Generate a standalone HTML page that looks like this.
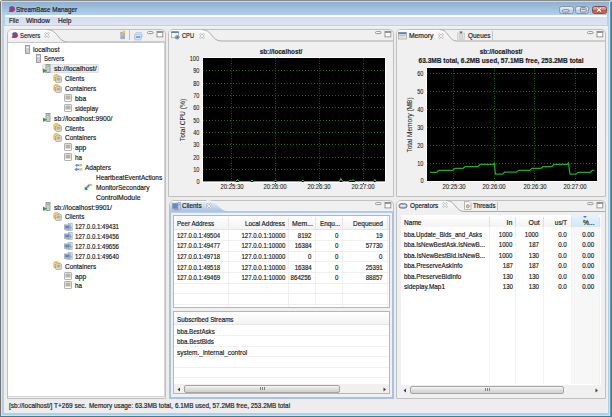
<!DOCTYPE html><html><head><meta charset="utf-8"><style>
*{margin:0;padding:0;box-sizing:border-box}
html,body{width:612px;height:417px;overflow:hidden;background:#f4f4f4;font-family:"Liberation Sans", sans-serif;color:#1c1c1c}
.a{position:absolute}
.t{position:absolute;white-space:nowrap;line-height:10px;height:10px;-webkit-text-stroke:0.2px #1c1c1c}
svg{position:absolute;overflow:visible}
</style></head><body>
<div class="a" style="left:0px;top:0px;width:612px;height:417px;background:linear-gradient(#cad8e8 0px,#cad8e8 1px,#8fb0d0 1px,#b3d0ea 14px,#b6d0ea 30px,#b2cde7);border:1px solid #75716c;border-top-color:#8c8a86;border-radius:3px 3px 0 0"></div>
<div class="a" style="left:1px;top:1px;width:610px;height:1px;background:#cad8e8"></div>
<div class="a" style="left:1px;top:2px;width:1px;height:414px;background:#d6e4f4"></div>
<div class="a" style="left:609px;top:2px;width:1px;height:414px;background:#cce2f8"></div>
<div class="a" style="left:610px;top:2px;width:2px;height:415px;background:linear-gradient(90deg,#5aa0b8,#2a8098)"></div>
<svg style="left:7.8px;top:6.2px" width="7" height="6" viewBox="0 0 7 6"><path d="M1.2 1.5Q2.5 0 5 0.3L6.5 1.5 7 4Q6.5 5.8 4 6H0.5L1.5 4.8z" fill="#3464c4"/><path d="M2.2 0.8H5.2Q6.4 1.2 6.2 3.2Q6 4.8 4.5 5H1.4L2 3.6H4.2Q4.8 3 4.3 2.4H2.6z" fill="#d42a42"/></svg>
<div class="t" style="left:16.4px;top:5.00px;font-size:7.8px;transform:scaleX(0.804);transform-origin:0 7.70px;color:#202020">StreamBase Manager</div>
<div class="a" style="left:558.5px;top:5.5px;width:15px;height:8px;border:1px solid #8596ae;border-radius:2.5px;background:linear-gradient(#e4edf7,#d3e0ef 45%,#b8cbe3 50%,#c4d6ec)"></div>
<svg style="left:562px;top:9px" width="8" height="4" viewBox="0 0 8 4"><rect x="0.5" y="0.7" width="6.5" height="2.3" rx="1" fill="#e6e6e6" stroke="#707070" stroke-width="0.8"/></svg>
<div class="a" style="left:575.3px;top:5.5px;width:13.5px;height:8px;border:1px solid #8596ae;border-radius:2.5px;background:linear-gradient(#e4edf7,#d3e0ef 45%,#b8cbe3 50%,#c4d6ec)"></div>
<svg style="left:579.5px;top:7px" width="7" height="6" viewBox="0 0 7 6"><rect x="0.5" y="0.6" width="5.5" height="4.4" rx="0.8" fill="#e6e6e6" stroke="#707070" stroke-width="0.8"/><rect x="1.5" y="1.8" width="3.5" height="0.9" fill="#5a6a8a"/></svg>
<div class="a" style="left:591.5px;top:5.5px;width:15.3px;height:8px;border:1px solid #8a4a40;border-radius:2.5px;background:linear-gradient(#f0b3a6,#e08472 45%,#c9503a 50%,#d56a50)"></div>
<svg style="left:596.3px;top:6.8px" width="6" height="5.5" viewBox="0 0 6 5.5"><path d="M1 0.8L5 4.8M5 0.8L1 4.8" stroke="#8a5050" stroke-width="2.2"/><path d="M1 0.8L5 4.8M5 0.8L1 4.8" stroke="#f4f4f4" stroke-width="1.3"/></svg>
<div class="a" style="left:5px;top:15px;width:602px;height:11px;background:linear-gradient(#fafcfe 0px,#fafcfe 2px,#d3dcee 2px,#dfe3f5 10px,#c9ced9 10px)"></div>
<div class="t" style="left:8.5px;top:16.00px;font-size:7.8px;transform:scaleX(0.779);transform-origin:0 7.70px;">File</div>
<div class="t" style="left:26.1px;top:16.00px;font-size:7.8px;transform:scaleX(0.855);transform-origin:0 7.70px;">Window</div>
<div class="t" style="left:58px;top:16.00px;font-size:7.8px;transform:scaleX(0.835);transform-origin:0 7.70px;">Help</div>
<div class="a" style="left:5px;top:26px;width:602px;height:386.5px;background:linear-gradient(#f2f2f2,#ececec 3px,#ededed)"></div>
<div class="t" style="left:8.5px;top:401.00px;font-size:7.8px;transform:scaleX(0.833);transform-origin:0 7.70px;">[sb://localhost/] T+269 sec.</div>
<div class="t" style="left:89px;top:401.00px;font-size:7.8px;transform:scaleX(0.822);transform-origin:0 7.70px;">Memory usage: 63.3MB total,</div>
<div class="t" style="left:174.8px;top:401.00px;font-size:7.8px;transform:scaleX(0.817);transform-origin:0 7.70px;">6.1MB used, 57.2MB free, 253.2MB total</div>
<div class="a" style="left:2px;top:415px;width:608px;height:1px;background:#c8e0f8"></div>
<div class="a" style="left:0px;top:416px;width:612px;height:1px;background:#2f8699"></div>
<div class="a" style="left:4px;top:26px;width:1px;height:387px;background:#f2f0ec"></div>
<div class="a" style="left:607px;top:26px;width:1px;height:387px;background:#f2f0ec"></div>
<svg style="left:0;top:0" width="1" height="1"><defs><linearGradient id="ga" x1="0" y1="0" x2="0" y2="1"><stop offset="0" stop-color="#edf1f6"/><stop offset="0.3" stop-color="#dae5f2"/><stop offset="1" stop-color="#a8c2e5"/></linearGradient><linearGradient id="gi" x1="0" y1="0" x2="0" y2="1"><stop offset="0" stop-color="#fbfbfb"/><stop offset="1" stop-color="#eeeeee"/></linearGradient></defs></svg>
<div class="a" style="left:7px;top:29px;width:159px;height:370px;border:1px solid #c0c0c0;border-radius:5px 5px 0 0;background:#f0f0f0"></div>
<svg style="left:7px;top:28px" width="159" height="16" viewBox="0 0 159 16"><path d="M1 14 L1 6 Q1 2 5 2 L41 2 C50.75 2 50.75 14 60.5 14 Z" fill="url(#gi)"/><path d="M4 2.5H40" stroke="#ffffff" stroke-width="1"/><path d="M40 1.5 C50.75 1.5 50.75 14 60.5 14 L158 14" fill="none" stroke="#ababab" stroke-width="1"/></svg>
<svg style="left:146.5px;top:30.5px" width="17" height="8" viewBox="0 0 17 8"><rect x="0.5" y="0.6" width="5.6" height="2" rx="1" fill="#fff" stroke="#8c8c8c" stroke-width="0.9"/><rect x="10" y="0.5" width="5.8" height="5.4" fill="#fff" stroke="#8c8c8c" stroke-width="0.9"/><rect x="10" y="0.5" width="5.8" height="1.4" fill="#8c8c8c"/></svg>
<div class="a" style="left:168px;top:29px;width:226px;height:168px;border:1px solid #c0c0c0;border-radius:5px 5px 0 0;background:#f0f0f0"></div>
<svg style="left:168px;top:28px" width="226" height="15" viewBox="0 0 226 15"><path d="M1 13 L1 6 Q1 2 5 2 L34.599999999999994 2 C43.849999999999994 2 43.849999999999994 13 53.099999999999994 13 Z" fill="url(#gi)"/><path d="M4 2.5H33.599999999999994" stroke="#ffffff" stroke-width="1"/><path d="M33.599999999999994 1.5 C43.849999999999994 1.5 43.849999999999994 13 53.099999999999994 13 L225 13" fill="none" stroke="#ababab" stroke-width="1"/></svg>
<svg style="left:374.5px;top:30.5px" width="17" height="8" viewBox="0 0 17 8"><rect x="0.5" y="0.6" width="5.6" height="2" rx="1" fill="#fff" stroke="#8c8c8c" stroke-width="0.9"/><rect x="10" y="0.5" width="5.8" height="5.4" fill="#fff" stroke="#8c8c8c" stroke-width="0.9"/><rect x="10" y="0.5" width="5.8" height="1.4" fill="#8c8c8c"/></svg>
<div class="a" style="left:396px;top:29px;width:210px;height:168px;border:1px solid #c0c0c0;border-radius:5px 5px 0 0;background:#f0f0f0"></div>
<svg style="left:396px;top:28px" width="210" height="15" viewBox="0 0 210 15"><path d="M1 13 L1 6 Q1 2 5 2 L44.5 2 C52.5 2 52.5 13 60.5 13 Z" fill="url(#gi)"/><path d="M4 2.5H43.5" stroke="#ffffff" stroke-width="1"/><path d="M43.5 1.5 C52.5 1.5 52.5 13 60.5 13 L209 13" fill="none" stroke="#ababab" stroke-width="1"/></svg>
<svg style="left:586.5px;top:30.5px" width="17" height="8" viewBox="0 0 17 8"><rect x="0.5" y="0.6" width="5.6" height="2" rx="1" fill="#fff" stroke="#8c8c8c" stroke-width="0.9"/><rect x="10" y="0.5" width="5.8" height="5.4" fill="#fff" stroke="#8c8c8c" stroke-width="0.9"/><rect x="10" y="0.5" width="5.8" height="1.4" fill="#8c8c8c"/></svg>
<div class="a" style="left:169px;top:200px;width:225px;height:199px;border:1px solid #c0c0c0;border-radius:5px 5px 0 0;background:#f0f0f0"></div>
<svg style="left:169px;top:199px" width="225" height="14" viewBox="0 0 225 14"><path d="M1 12 L1 6 Q1 2 5 2 L38.5 2 C49.5 2 49.5 12 60.5 12 Z" fill="url(#ga)"/><path d="M4 2.5H37.5" stroke="#ffffff" stroke-width="1"/><path d="M37.5 1.5 C49.5 1.5 49.5 12 60.5 12 L224 12" fill="none" stroke="#f4f6f9" stroke-width="1"/></svg>
<svg style="left:374.5px;top:201.5px" width="17" height="8" viewBox="0 0 17 8"><rect x="0.5" y="0.6" width="5.6" height="2" rx="1" fill="#fff" stroke="#8c8c8c" stroke-width="0.9"/><rect x="10" y="0.5" width="5.8" height="5.4" fill="#fff" stroke="#8c8c8c" stroke-width="0.9"/><rect x="10" y="0.5" width="5.8" height="1.4" fill="#8c8c8c"/></svg>
<div class="a" style="left:396px;top:200px;width:210px;height:199px;border:1px solid #c0c0c0;border-radius:5px 5px 0 0;background:#f0f0f0"></div>
<svg style="left:396px;top:199px" width="210" height="14.5" viewBox="0 0 210 14.5"><path d="M1 12.5 L1 6 Q1 2 5 2 L51 2 C59.5 2 59.5 12.5 68 12.5 Z" fill="url(#gi)"/><path d="M4 2.5H50" stroke="#ffffff" stroke-width="1"/><path d="M50 1.5 C59.5 1.5 59.5 12.5 68 12.5 L209 12.5" fill="none" stroke="#ababab" stroke-width="1"/></svg>
<svg style="left:586.5px;top:201.5px" width="17" height="8" viewBox="0 0 17 8"><rect x="0.5" y="0.6" width="5.6" height="2" rx="1" fill="#fff" stroke="#8c8c8c" stroke-width="0.9"/><rect x="10" y="0.5" width="5.8" height="5.4" fill="#fff" stroke="#8c8c8c" stroke-width="0.9"/><rect x="10" y="0.5" width="5.8" height="1.4" fill="#8c8c8c"/></svg>
<div class="a" style="left:170px;top:211px;width:223px;height:2px;background:linear-gradient(#aac3e6,#bcd0eb)"></div>
<div class="a" style="left:170px;top:213px;width:223px;height:1.5px;background:#eef2f8"></div>
<div class="a" style="left:169px;top:213px;width:1.5px;height:185.5px;background:#a9c1e2"></div>
<div class="a" style="left:392px;top:213px;width:2px;height:185.5px;background:#a9c1e2"></div>
<div class="a" style="left:169px;top:397px;width:225px;height:1.5px;background:#a9c1e2"></div>
<svg style="left:11px;top:32px" width="7" height="6" viewBox="0 0 7 6"><path d="M1.2 1.5Q2.5 0 5 0.3L6.5 1.5 7 4Q6.5 5.8 4 6H0.5L1.5 4.8z" fill="#3464c4"/><path d="M2.2 0.8H5.2Q6.4 1.2 6.2 3.2Q6 4.8 4.5 5H1.4L2 3.6H4.2Q4.8 3 4.3 2.4H2.6z" fill="#d42a42"/></svg>
<div class="t" style="left:19.7px;top:31.00px;font-size:7.8px;transform:scaleX(0.748);transform-origin:0 7.70px;">Servers</div>
<svg style="left:44.3px;top:32.4px" width="6" height="6" viewBox="0 0 6 6"><path d="M0.8 0.8L5.2 5.2M5.2 0.8L0.8 5.2" stroke="#bcbcbc" stroke-width="2"/><path d="M0.8 0.8L5.2 5.2M5.2 0.8L0.8 5.2" stroke="#f8f8f8" stroke-width="0.9"/></svg>
<svg style="left:171px;top:31px" width="10" height="9" viewBox="0 0 10 9"><rect x="0.5" y="0.8" width="7" height="6" fill="#fbfbf8" stroke="#a89e84" stroke-width="0.7"/><rect x="0.3" y="0.4" width="7.4" height="1.6" fill="#4f80cc"/><circle cx="6.2" cy="6.2" r="2" fill="#8aa6c8" stroke="#5a7aa4" stroke-width="0.8" stroke-dasharray="0.8 0.5"/><circle cx="6.2" cy="6.2" r="0.7" fill="#2a4a78"/></svg>
<div class="t" style="left:182px;top:31.00px;font-size:7.8px;transform:scaleX(0.729);transform-origin:0 7.70px;">CPU</div>
<svg style="left:198.5px;top:32.5px" width="6" height="6" viewBox="0 0 6 6"><path d="M0.8 0.8L5.2 5.2M5.2 0.8L0.8 5.2" stroke="#bcbcbc" stroke-width="2"/><path d="M0.8 0.8L5.2 5.2M5.2 0.8L0.8 5.2" stroke="#f8f8f8" stroke-width="0.9"/></svg>
<svg style="left:398px;top:31.5px" width="9" height="8" viewBox="0 0 9 8"><rect x="0.4" y="0.4" width="8" height="6.6" fill="#f4f2ea" stroke="#a89e84" stroke-width="0.7"/><rect x="0.4" y="0.4" width="8" height="1.8" fill="#4f80cc"/><rect x="1.2" y="2.8" width="6.4" height="1.4" fill="#a8c0e4"/><rect x="1.2" y="4.6" width="6.4" height="1.2" fill="#c8d8ee"/></svg>
<div class="t" style="left:409px;top:31.00px;font-size:7.8px;transform:scaleX(0.863);transform-origin:0 7.70px;">Memory</div>
<svg style="left:438px;top:32.5px" width="6" height="6" viewBox="0 0 6 6"><path d="M0.8 0.8L5.2 5.2M5.2 0.8L0.8 5.2" stroke="#bcbcbc" stroke-width="2"/><path d="M0.8 0.8L5.2 5.2M5.2 0.8L0.8 5.2" stroke="#f8f8f8" stroke-width="0.9"/></svg>
<svg style="left:457px;top:30.5px" width="8" height="9" viewBox="0 0 8 9"><rect x="0.5" y="2" width="7" height="6.5" fill="#e4e4e4" stroke="#c4c4c4" stroke-width="0.6"/><path d="M2.5 2.5V8M4 2.5V8M5.5 2.5V8" stroke="#bdbdbd" stroke-width="0.6"/><path d="M2.3 0.5H5.7L4 3z" fill="#606060"/></svg>
<div class="t" style="left:467.9px;top:31.00px;font-size:7.8px;transform:scaleX(0.824);transform-origin:0 7.70px;">Queues</div>
<div class="a" style="left:491.5px;top:31px;width:1px;height:10px;background:#c4c4c4"></div>
<svg style="left:171.5px;top:202px" width="9" height="9" viewBox="0 0 9 9"><rect x="0.5" y="1.5" width="6.5" height="5" fill="#5a8ed8" stroke="#8a96a8" stroke-width="0.8"/><rect x="1.5" y="7" width="5" height="1.5" fill="#a0a8b4"/><rect x="6" y="0.5" width="2.5" height="7" fill="#d0d4da" stroke="#8a96a8" stroke-width="0.6"/><rect x="6.8" y="2" width="1" height="1" fill="#3cb040"/></svg>
<div class="t" style="left:181.7px;top:201.00px;font-size:7.8px;transform:scaleX(0.822);transform-origin:0 7.70px;">Clients</div>
<svg style="left:205.6px;top:203px" width="6" height="6" viewBox="0 0 6 6"><path d="M0.8 0.8L5.2 5.2M5.2 0.8L0.8 5.2" stroke="#bcbcbc" stroke-width="2"/><path d="M0.8 0.8L5.2 5.2M5.2 0.8L0.8 5.2" stroke="#f8f8f8" stroke-width="0.9"/></svg>
<svg style="left:398px;top:203px" width="10" height="6" viewBox="0 0 10 6"><rect x="1" y="0.8" width="8" height="4.2" rx="2" fill="#c4c6dc" stroke="#5a5c70" stroke-width="0.9"/><rect x="2.5" y="2" width="5" height="1.6" fill="#e8e8f4"/></svg>
<div class="t" style="left:409.6px;top:201.00px;font-size:7.8px;transform:scaleX(0.813);transform-origin:0 7.70px;">Operators</div>
<svg style="left:442.3px;top:202px" width="6" height="6" viewBox="0 0 6 6"><path d="M0.8 0.8L5.2 5.2M5.2 0.8L0.8 5.2" stroke="#bcbcbc" stroke-width="2"/><path d="M0.8 0.8L5.2 5.2M5.2 0.8L0.8 5.2" stroke="#f8f8f8" stroke-width="0.9"/></svg>
<svg style="left:463.5px;top:201px" width="8" height="9" viewBox="0 0 8 9"><path d="M0.5 0.5h4.5l2 2v6h-6.5z" fill="#fbfbfb" stroke="#c0a468" stroke-width="0.8"/><circle cx="3.8" cy="5.2" r="1.6" fill="#b8cce8" stroke="#5a80b8" stroke-width="0.6"/></svg>
<div class="t" style="left:472.7px;top:201.00px;font-size:7.8px;transform:scaleX(0.786);transform-origin:0 7.70px;">Threads</div>
<div class="a" style="left:497px;top:201.5px;width:1px;height:10px;background:#c4c4c4"></div>
<div class="a" style="left:8px;top:42px;width:157px;height:1.5px;background:#c8c8c8"></div>
<div class="a" style="left:8px;top:43px;width:156px;height:354px;background:#fff"></div>
<div class="a" style="left:164px;top:43px;width:1px;height:354px;background:#d4d4d8"></div>
<div class="a" style="left:8px;top:396px;width:157px;height:1px;background:#d4d4d8"></div>
<svg style="left:120px;top:30px" width="7" height="10" viewBox="0 0 7 10"><rect x="0.8" y="2.2" width="3.8" height="6.6" fill="#b4bccc" stroke="#9098a8" stroke-width="0.6"/><rect x="1.4" y="6" width="2.6" height="2.2" fill="#9aa8d0"/><circle cx="4" cy="2" r="1.4" fill="#f4c84a"/><path d="M3.6 3.4v1.2h0.8v-1.2" fill="#c8a040"/></svg>
<div class="a" style="left:129px;top:30px;width:1px;height:10px;background:#c0c0c0"></div>
<svg style="left:134px;top:31.5px" width="9" height="9" viewBox="0 0 9 9"><rect x="2" y="0.5" width="6" height="5" rx="0.8" fill="#e4eefa" stroke="#a4c0e4" stroke-width="0.7"/><rect x="0.6" y="2.2" width="6.6" height="5.6" rx="0.8" fill="#dce8f8" stroke="#8eb0dc" stroke-width="0.7"/><rect x="1.8" y="4.4" width="4.4" height="1.3" fill="#4a82d0"/></svg>
<svg style="left:25px;top:44.6px" width="5" height="9" viewBox="0 0 5 9"><rect x="0.5" y="0.5" width="4" height="8" fill="#c9ccd4" stroke="#8a8e98" stroke-width="0.8"/><rect x="1.2" y="2" width="2.6" height="1" fill="#f4f4f4"/></svg>
<div class="t" style="left:33px;top:45.00px;font-size:7.8px;transform:scaleX(0.861);transform-origin:0 7.70px;">localhost</div>
<svg style="left:35.6px;top:54.47px" width="5" height="9" viewBox="0 0 5 9"><rect x="0.5" y="0.5" width="4" height="8" fill="#c9ccd4" stroke="#8a8e98" stroke-width="0.8"/><rect x="1.2" y="2" width="2.6" height="1" fill="#f4f4f4"/></svg>
<div class="t" style="left:43.6px;top:54.00px;font-size:7.8px;transform:scaleX(0.752);transform-origin:0 7.70px;">Servers</div>
<div class="a" style="left:41.5px;top:64.3px;width:57.5px;height:9.2px;background:#ebebeb;border:1px solid #dedede;border-radius:1.5px"></div>
<svg style="left:42.7px;top:63.84px" width="8" height="9" viewBox="0 0 8 9"><rect x="3" y="0.5" width="4" height="8" fill="#c9ccd4" stroke="#8a8e98" stroke-width="0.8"/><rect x="4.5" y="1.5" width="1.2" height="1.2" fill="#3cb040"/><path d="M0 4.5L4 6.8 0 9z" fill="#2aa030"/></svg>
<div class="t" style="left:54.2px;top:64.00px;font-size:7.8px;transform:scaleX(0.895);transform-origin:0 7.70px;">sb://localhost/</div>
<svg style="left:53.3px;top:73.71000000000001px" width="9" height="9" viewBox="0 0 9 9"><path d="M0.8 2.2Q0.8 0.6 2.4 0.6H4.2Q5.4 0.6 5.6 1.6H6.4Q7.2 1.8 7.2 3V6.5H0.8z" fill="#f2c45a" stroke="#d8a03a" stroke-width="0.6"/><path d="M1.2 2.2H6.8" stroke="#fde6a8" stroke-width="0.8"/><rect x="2.6" y="2.8" width="5.8" height="5.6" rx="0.6" fill="#e4e0da" stroke="#8e98a8" stroke-width="0.7"/><rect x="3.6" y="3.8" width="3.8" height="2.8" fill="#b8ae98"/></svg>
<div class="t" style="left:64.8px;top:74.00px;font-size:7.8px;transform:scaleX(0.809);transform-origin:0 7.70px;">Clients</div>
<svg style="left:53.3px;top:83.58px" width="9" height="9" viewBox="0 0 9 9"><path d="M0.8 2.2Q0.8 0.6 2.4 0.6H4.2Q5.4 0.6 5.6 1.6H6.4Q7.2 1.8 7.2 3V6.5H0.8z" fill="#f2c45a" stroke="#d8a03a" stroke-width="0.6"/><path d="M1.2 2.2H6.8" stroke="#fde6a8" stroke-width="0.8"/><rect x="2.6" y="2.8" width="5.8" height="5.6" rx="0.6" fill="#e4e0da" stroke="#8e98a8" stroke-width="0.7"/><rect x="3.6" y="3.8" width="3.8" height="2.8" fill="#b8ae98"/></svg>
<div class="t" style="left:64.8px;top:84.00px;font-size:7.8px;transform:scaleX(0.827);transform-origin:0 7.70px;">Containers</div>
<svg style="left:64.4px;top:93.94999999999999px" width="8" height="8" viewBox="0 0 8 8"><rect x="0.5" y="0.5" width="7" height="7" rx="0.6" fill="#eeebe6" stroke="#98a2b0" stroke-width="0.8"/><rect x="1.6" y="1.6" width="4.8" height="3.8" fill="#bdb29a"/><rect x="1.3" y="6" width="5.4" height="1" fill="#ffffff"/></svg>
<div class="t" style="left:75px;top:94.00px;font-size:7.8px;transform:scaleX(0.861);transform-origin:0 7.70px;">bba</div>
<svg style="left:64.4px;top:103.82px" width="8" height="8" viewBox="0 0 8 8"><rect x="0.5" y="0.5" width="7" height="7" rx="0.6" fill="#eeebe6" stroke="#98a2b0" stroke-width="0.8"/><rect x="1.6" y="1.6" width="4.8" height="3.8" fill="#bdb29a"/><rect x="1.3" y="6" width="5.4" height="1" fill="#ffffff"/></svg>
<div class="t" style="left:75px;top:104.00px;font-size:7.8px;transform:scaleX(0.807);transform-origin:0 7.70px;">sideplay</div>
<svg style="left:42.7px;top:113.19px" width="8" height="9" viewBox="0 0 8 9"><rect x="3" y="0.5" width="4" height="8" fill="#c9ccd4" stroke="#8a8e98" stroke-width="0.8"/><rect x="4.5" y="1.5" width="1.2" height="1.2" fill="#3cb040"/><path d="M0 4.5L4 6.8 0 9z" fill="#2aa030"/></svg>
<div class="t" style="left:54.2px;top:114.00px;font-size:7.8px;transform:scaleX(0.868);transform-origin:0 7.70px;">sb://localhost:9900/</div>
<svg style="left:53.3px;top:123.06px" width="9" height="9" viewBox="0 0 9 9"><path d="M0.8 2.2Q0.8 0.6 2.4 0.6H4.2Q5.4 0.6 5.6 1.6H6.4Q7.2 1.8 7.2 3V6.5H0.8z" fill="#f2c45a" stroke="#d8a03a" stroke-width="0.6"/><path d="M1.2 2.2H6.8" stroke="#fde6a8" stroke-width="0.8"/><rect x="2.6" y="2.8" width="5.8" height="5.6" rx="0.6" fill="#e4e0da" stroke="#8e98a8" stroke-width="0.7"/><rect x="3.6" y="3.8" width="3.8" height="2.8" fill="#b8ae98"/></svg>
<div class="t" style="left:64.8px;top:124.00px;font-size:7.8px;transform:scaleX(0.809);transform-origin:0 7.70px;">Clients</div>
<svg style="left:53.3px;top:132.93px" width="9" height="9" viewBox="0 0 9 9"><path d="M0.8 2.2Q0.8 0.6 2.4 0.6H4.2Q5.4 0.6 5.6 1.6H6.4Q7.2 1.8 7.2 3V6.5H0.8z" fill="#f2c45a" stroke="#d8a03a" stroke-width="0.6"/><path d="M1.2 2.2H6.8" stroke="#fde6a8" stroke-width="0.8"/><rect x="2.6" y="2.8" width="5.8" height="5.6" rx="0.6" fill="#e4e0da" stroke="#8e98a8" stroke-width="0.7"/><rect x="3.6" y="3.8" width="3.8" height="2.8" fill="#b8ae98"/></svg>
<div class="t" style="left:64.8px;top:133.00px;font-size:7.8px;transform:scaleX(0.827);transform-origin:0 7.70px;">Containers</div>
<svg style="left:64.4px;top:143.29999999999998px" width="8" height="8" viewBox="0 0 8 8"><rect x="0.5" y="0.5" width="7" height="7" rx="0.6" fill="#eeebe6" stroke="#98a2b0" stroke-width="0.8"/><rect x="1.6" y="1.6" width="4.8" height="3.8" fill="#bdb29a"/><rect x="1.3" y="6" width="5.4" height="1" fill="#ffffff"/></svg>
<div class="t" style="left:75px;top:143.00px;font-size:7.8px;transform:scaleX(0.861);transform-origin:0 7.70px;">app</div>
<svg style="left:64.4px;top:153.17px" width="8" height="8" viewBox="0 0 8 8"><rect x="0.5" y="0.5" width="7" height="7" rx="0.6" fill="#eeebe6" stroke="#98a2b0" stroke-width="0.8"/><rect x="1.6" y="1.6" width="4.8" height="3.8" fill="#bdb29a"/><rect x="1.3" y="6" width="5.4" height="1" fill="#ffffff"/></svg>
<div class="t" style="left:75px;top:153.00px;font-size:7.8px;transform:scaleX(0.806);transform-origin:0 7.70px;">ha</div>
<svg style="left:73.8px;top:162.54px" width="9" height="9" viewBox="0 0 9 9"><path d="M0.8 2.2L3.2 0.4V1.4H5.2V3H3.2V4z" fill="#5f8fd8"/><rect x="5.2" y="1" width="2.8" height="2.4" fill="#e6c060"/><path d="M0.2 6.4L2.8 4.6V5.6H5.4V7.2H2.8V8.2z" fill="#5f8fd8"/><rect x="5.4" y="5.2" width="3" height="2.4" fill="#e6c060"/></svg>
<div class="t" style="left:85.3px;top:163.00px;font-size:7.8px;transform:scaleX(0.830);transform-origin:0 7.70px;">Adapters</div>
<div class="t" style="left:96.1px;top:173.00px;font-size:7.8px;transform:scaleX(0.829);transform-origin:0 7.70px;">HeartbeatEventActions</div>
<svg style="left:83.6px;top:182.27999999999997px" width="10" height="9" viewBox="0 0 10 9"><path d="M0.3 6L2.6 4.4 3.8 7.4 1.2 8.6z" fill="#2f9e3e"/><path d="M2.2 4.6L4.8 2 6.4 3.6 3.8 6.2z" fill="#6a98dc"/><path d="M5.6 1.6L9.2 3.1 5.6 4.4z" fill="#e9b83c"/></svg>
<div class="t" style="left:96.1px;top:183.00px;font-size:7.8px;transform:scaleX(0.845);transform-origin:0 7.70px;">MonitorSecondary</div>
<div class="t" style="left:96.1px;top:193.00px;font-size:7.8px;transform:scaleX(0.877);transform-origin:0 7.70px;">ControlModule</div>
<svg style="left:42.7px;top:202.01999999999998px" width="8" height="9" viewBox="0 0 8 9"><rect x="3" y="0.5" width="4" height="8" fill="#c9ccd4" stroke="#8a8e98" stroke-width="0.8"/><rect x="4.5" y="1.5" width="1.2" height="1.2" fill="#3cb040"/><path d="M0 4.5L4 6.8 0 9z" fill="#2aa030"/></svg>
<div class="t" style="left:54.2px;top:203.00px;font-size:7.8px;transform:scaleX(0.863);transform-origin:0 7.70px;">sb://localhost:9901/</div>
<svg style="left:53.3px;top:211.89px" width="9" height="9" viewBox="0 0 9 9"><path d="M0.8 2.2Q0.8 0.6 2.4 0.6H4.2Q5.4 0.6 5.6 1.6H6.4Q7.2 1.8 7.2 3V6.5H0.8z" fill="#f2c45a" stroke="#d8a03a" stroke-width="0.6"/><path d="M1.2 2.2H6.8" stroke="#fde6a8" stroke-width="0.8"/><rect x="2.6" y="2.8" width="5.8" height="5.6" rx="0.6" fill="#e4e0da" stroke="#8e98a8" stroke-width="0.7"/><rect x="3.6" y="3.8" width="3.8" height="2.8" fill="#b8ae98"/></svg>
<div class="t" style="left:64.8px;top:212.00px;font-size:7.8px;transform:scaleX(0.809);transform-origin:0 7.70px;">Clients</div>
<svg style="left:64px;top:222.56px" width="9" height="8" viewBox="0 0 9 8"><rect x="4.6" y="0.4" width="3.6" height="7" fill="#dde0e5" stroke="#a4abb4" stroke-width="0.6"/><rect x="6.7" y="4.2" width="0.9" height="1.3" fill="#3cb83c"/><rect x="0.4" y="1.9" width="6" height="4.4" fill="#c9cdd3" stroke="#8c949e" stroke-width="0.6"/><rect x="1.2" y="2.6" width="4.4" height="2.9" fill="#4f8ad8"/><rect x="1.8" y="6.6" width="3.4" height="1" fill="#a8aeb6"/></svg>
<div class="t" style="left:75px;top:222.00px;font-size:7.8px;transform:scaleX(0.780);transform-origin:0 7.70px;">127.0.0.1:49431</div>
<svg style="left:64px;top:232.42999999999998px" width="9" height="8" viewBox="0 0 9 8"><rect x="4.6" y="0.4" width="3.6" height="7" fill="#dde0e5" stroke="#a4abb4" stroke-width="0.6"/><rect x="6.7" y="4.2" width="0.9" height="1.3" fill="#3cb83c"/><rect x="0.4" y="1.9" width="6" height="4.4" fill="#c9cdd3" stroke="#8c949e" stroke-width="0.6"/><rect x="1.2" y="2.6" width="4.4" height="2.9" fill="#4f8ad8"/><rect x="1.8" y="6.6" width="3.4" height="1" fill="#a8aeb6"/></svg>
<div class="t" style="left:75px;top:232.00px;font-size:7.8px;transform:scaleX(0.780);transform-origin:0 7.70px;">127.0.0.1:49456</div>
<svg style="left:64px;top:242.29999999999998px" width="9" height="8" viewBox="0 0 9 8"><rect x="4.6" y="0.4" width="3.6" height="7" fill="#dde0e5" stroke="#a4abb4" stroke-width="0.6"/><rect x="6.7" y="4.2" width="0.9" height="1.3" fill="#3cb83c"/><rect x="0.4" y="1.9" width="6" height="4.4" fill="#c9cdd3" stroke="#8c949e" stroke-width="0.6"/><rect x="1.2" y="2.6" width="4.4" height="2.9" fill="#4f8ad8"/><rect x="1.8" y="6.6" width="3.4" height="1" fill="#a8aeb6"/></svg>
<div class="t" style="left:75px;top:242.00px;font-size:7.8px;transform:scaleX(0.780);transform-origin:0 7.70px;">127.0.0.1:49656</div>
<svg style="left:64px;top:252.17000000000002px" width="9" height="8" viewBox="0 0 9 8"><rect x="4.6" y="0.4" width="3.6" height="7" fill="#dde0e5" stroke="#a4abb4" stroke-width="0.6"/><rect x="6.7" y="4.2" width="0.9" height="1.3" fill="#3cb83c"/><rect x="0.4" y="1.9" width="6" height="4.4" fill="#c9cdd3" stroke="#8c949e" stroke-width="0.6"/><rect x="1.2" y="2.6" width="4.4" height="2.9" fill="#4f8ad8"/><rect x="1.8" y="6.6" width="3.4" height="1" fill="#a8aeb6"/></svg>
<div class="t" style="left:75px;top:252.00px;font-size:7.8px;transform:scaleX(0.780);transform-origin:0 7.70px;">127.0.0.1:49640</div>
<svg style="left:53.3px;top:261.24px" width="9" height="9" viewBox="0 0 9 9"><path d="M0.8 2.2Q0.8 0.6 2.4 0.6H4.2Q5.4 0.6 5.6 1.6H6.4Q7.2 1.8 7.2 3V6.5H0.8z" fill="#f2c45a" stroke="#d8a03a" stroke-width="0.6"/><path d="M1.2 2.2H6.8" stroke="#fde6a8" stroke-width="0.8"/><rect x="2.6" y="2.8" width="5.8" height="5.6" rx="0.6" fill="#e4e0da" stroke="#8e98a8" stroke-width="0.7"/><rect x="3.6" y="3.8" width="3.8" height="2.8" fill="#b8ae98"/></svg>
<div class="t" style="left:64.8px;top:262.00px;font-size:7.8px;transform:scaleX(0.827);transform-origin:0 7.70px;">Containers</div>
<svg style="left:64.4px;top:271.61px" width="8" height="8" viewBox="0 0 8 8"><rect x="0.5" y="0.5" width="7" height="7" rx="0.6" fill="#eeebe6" stroke="#98a2b0" stroke-width="0.8"/><rect x="1.6" y="1.6" width="4.8" height="3.8" fill="#bdb29a"/><rect x="1.3" y="6" width="5.4" height="1" fill="#ffffff"/></svg>
<div class="t" style="left:75px;top:272.00px;font-size:7.8px;transform:scaleX(0.861);transform-origin:0 7.70px;">app</div>
<svg style="left:64.4px;top:281.48px" width="8" height="8" viewBox="0 0 8 8"><rect x="0.5" y="0.5" width="7" height="7" rx="0.6" fill="#eeebe6" stroke="#98a2b0" stroke-width="0.8"/><rect x="1.6" y="1.6" width="4.8" height="3.8" fill="#bdb29a"/><rect x="1.3" y="6" width="5.4" height="1" fill="#ffffff"/></svg>
<div class="t" style="left:75px;top:281.00px;font-size:7.8px;transform:scaleX(0.806);transform-origin:0 7.70px;">ha</div>
<div class="t" style="left:131.2px;width:300px;text-align:center;top:47.00px;font-size:6.8px;font-weight:bold;transform:scaleX(0.934);transform-origin:50% 7.36px;-webkit-text-stroke:0.15px #1c1c1c">sb://localhost/</div>
<div class="a" style="left:202px;top:57px;width:184px;height:126px;background:#fff"></div>
<div class="a" style="left:203px;top:58px;width:182px;height:124px;background:#000"></div>
<svg style="left:203px;top:58px" width="182" height="126" viewBox="0 0 182 126"><path d="M0 111.5H182" stroke="#0b6e0b" stroke-width="1" stroke-dasharray="1 2"/><path d="M0 99.5H182" stroke="#0b6e0b" stroke-width="1" stroke-dasharray="1 2"/><path d="M0 86.5H182" stroke="#0b6e0b" stroke-width="1" stroke-dasharray="1 2"/><path d="M0 74.5H182" stroke="#0b6e0b" stroke-width="1" stroke-dasharray="1 2"/><path d="M0 62.5H182" stroke="#0b6e0b" stroke-width="1" stroke-dasharray="1 2"/><path d="M0 49.5H182" stroke="#0b6e0b" stroke-width="1" stroke-dasharray="1 2"/><path d="M0 37.5H182" stroke="#0b6e0b" stroke-width="1" stroke-dasharray="1 2"/><path d="M0 25.5H182" stroke="#0b6e0b" stroke-width="1" stroke-dasharray="1 2"/><path d="M0 12.5H182" stroke="#0b6e0b" stroke-width="1" stroke-dasharray="1 2"/><path d="M28.5 0V126" stroke="#0b6e0b" stroke-width="1" stroke-dasharray="1 1.5"/><path d="M72.5 0V126" stroke="#0b6e0b" stroke-width="1" stroke-dasharray="1 1.5"/><path d="M116.5 0V126" stroke="#0b6e0b" stroke-width="1" stroke-dasharray="1 1.5"/><path d="M160.5 0V126" stroke="#0b6e0b" stroke-width="1" stroke-dasharray="1 1.5"/><path d="M0.0 123.5 L32.5 123.5 L34.4 121.5 L36.0 123.5 L47.5 123.5 L49.0 122.0 L50.5 123.5 L71.0 123.5 L72.6 122.3 L74.0 123.5 L98.5 123.5 L99.8 122.0 L101.0 123.5 L136.5 123.5 L137.8 120.5 L139.5 123.5 L146.0 123.5 L147.3 122.0 L148.5 123.0 L150.0 121.5 L152.0 123.5 L170.5 123.5 L171.8 121.5 L173.0 123.5 L182.0 123.5" fill="none" stroke="#46d246" stroke-width="1"/></svg>
<div class="t" style="right:412.5px;top:177.00px;font-size:6.6px;transform:scaleX(0.844);transform-origin:100% 7.29px;-webkit-text-stroke:0.08px #1c1c1c">0</div>
<div class="t" style="right:412.5px;top:165.00px;font-size:6.6px;transform:scaleX(0.844);transform-origin:100% 7.29px;-webkit-text-stroke:0.08px #1c1c1c">10</div>
<div class="t" style="right:412.5px;top:153.00px;font-size:6.6px;transform:scaleX(0.844);transform-origin:100% 7.29px;-webkit-text-stroke:0.08px #1c1c1c">20</div>
<div class="t" style="right:412.5px;top:140.00px;font-size:6.6px;transform:scaleX(0.844);transform-origin:100% 7.29px;-webkit-text-stroke:0.08px #1c1c1c">30</div>
<div class="t" style="right:412.5px;top:128.00px;font-size:6.6px;transform:scaleX(0.844);transform-origin:100% 7.29px;-webkit-text-stroke:0.08px #1c1c1c">40</div>
<div class="t" style="right:412.5px;top:116.00px;font-size:6.6px;transform:scaleX(0.844);transform-origin:100% 7.29px;-webkit-text-stroke:0.08px #1c1c1c">50</div>
<div class="t" style="right:412.5px;top:103.00px;font-size:6.6px;transform:scaleX(0.844);transform-origin:100% 7.29px;-webkit-text-stroke:0.08px #1c1c1c">60</div>
<div class="t" style="right:412.5px;top:91.00px;font-size:6.6px;transform:scaleX(0.844);transform-origin:100% 7.29px;-webkit-text-stroke:0.08px #1c1c1c">70</div>
<div class="t" style="right:412.5px;top:79.00px;font-size:6.6px;transform:scaleX(0.844);transform-origin:100% 7.29px;-webkit-text-stroke:0.08px #1c1c1c">80</div>
<div class="t" style="right:412.5px;top:66.00px;font-size:6.6px;transform:scaleX(0.844);transform-origin:100% 7.29px;-webkit-text-stroke:0.08px #1c1c1c">90</div>
<div class="t" style="right:412.5px;top:54.00px;font-size:6.6px;transform:scaleX(0.844);transform-origin:100% 7.29px;-webkit-text-stroke:0.08px #1c1c1c">100</div>
<div class="a" style="left:183.2px;top:119.7px;width:0;height:0"><div class="t" style="left:-30px;top:-5px;width:60px;text-align:center;transform:rotate(-90deg) scaleX(0.88);font-size:7.6px;-webkit-text-stroke:0.05px #1c1c1c">Total CPU (%)</div></div>
<div class="t" style="left:81.6px;width:300px;text-align:center;top:182.00px;font-size:6.6px;transform:scaleX(0.904);transform-origin:50% 7.29px;-webkit-text-stroke:0.08px #1c1c1c">20:25:30</div>
<div class="t" style="left:125.39999999999998px;width:300px;text-align:center;top:182.00px;font-size:6.6px;transform:scaleX(0.904);transform-origin:50% 7.29px;-webkit-text-stroke:0.08px #1c1c1c">20:26:00</div>
<div class="t" style="left:169.2px;width:300px;text-align:center;top:182.00px;font-size:6.6px;transform:scaleX(0.904);transform-origin:50% 7.29px;-webkit-text-stroke:0.08px #1c1c1c">20:26:30</div>
<div class="t" style="left:213px;width:300px;text-align:center;top:182.00px;font-size:6.6px;transform:scaleX(0.904);transform-origin:50% 7.29px;-webkit-text-stroke:0.08px #1c1c1c">20:27:00</div>
<div class="t" style="left:350.5px;width:300px;text-align:center;top:47.00px;font-size:6.8px;font-weight:bold;transform:scaleX(0.934);transform-origin:50% 7.36px;-webkit-text-stroke:0.15px #1c1c1c">sb://localhost/</div>
<div class="t" style="left:350.8px;width:300px;text-align:center;top:56.00px;font-size:6.8px;font-weight:bold;transform:scaleX(0.964);transform-origin:50% 7.36px;-webkit-text-stroke:0.15px #1c1c1c">63.3MB total, 6.2MB used, 57.1MB free, 253.2MB total</div>
<div class="a" style="left:426px;top:67px;width:172px;height:115px;background:#fff"></div>
<div class="a" style="left:427px;top:68px;width:170px;height:113px;background:#000"></div>
<svg style="left:427px;top:68px" width="170" height="115" viewBox="0 0 170 115"><path d="M0 95.5H170" stroke="#0b6e0b" stroke-width="1" stroke-dasharray="1 2"/><path d="M0 77.5H170" stroke="#0b6e0b" stroke-width="1" stroke-dasharray="1 2"/><path d="M0 59.5H170" stroke="#0b6e0b" stroke-width="1" stroke-dasharray="1 2"/><path d="M0 41.5H170" stroke="#0b6e0b" stroke-width="1" stroke-dasharray="1 2"/><path d="M0 23.5H170" stroke="#0b6e0b" stroke-width="1" stroke-dasharray="1 2"/><path d="M0 5.5H170" stroke="#0b6e0b" stroke-width="1" stroke-dasharray="1 2"/><path d="M26.5 0V115" stroke="#0b6e0b" stroke-width="1" stroke-dasharray="1 1.5"/><path d="M67.5 0V115" stroke="#0b6e0b" stroke-width="1" stroke-dasharray="1 1.5"/><path d="M107.5 0V115" stroke="#0b6e0b" stroke-width="1" stroke-dasharray="1 1.5"/><path d="M148.5 0V115" stroke="#0b6e0b" stroke-width="1" stroke-dasharray="1 1.5"/><path d="M3.0 104.4 L10.0 104.4 L11.5 102.3 L26.0 102.3 L28.0 100.4 L36.0 100.4 L38.0 98.7 L51.0 98.7 L53.0 96.4 L66.3 96.4 L67.2 95.3 L68.5 106.2 L75.7 106.2 L77.7 104.2 L89.5 104.2 L91.3 102.3 L103.0 102.3 L105.0 100.4 L114.0 100.4 L116.0 98.7 L125.0 98.7 L127.0 96.4 L140.3 96.4 L141.3 95.0 L143.0 106.2 L149.0 106.2 L151.0 104.3 L163.5 104.3 L165.3 102.4 L167.5 102.2" fill="none" stroke="#1cac1c" stroke-width="1.3"/></svg>
<div class="t" style="right:188.5px;top:176.00px;font-size:6.6px;transform:scaleX(0.844);transform-origin:100% 7.29px;-webkit-text-stroke:0.08px #1c1c1c">0</div>
<div class="t" style="right:188.5px;top:159.00px;font-size:6.6px;transform:scaleX(0.844);transform-origin:100% 7.29px;-webkit-text-stroke:0.08px #1c1c1c">10</div>
<div class="t" style="right:188.5px;top:141.00px;font-size:6.6px;transform:scaleX(0.844);transform-origin:100% 7.29px;-webkit-text-stroke:0.08px #1c1c1c">20</div>
<div class="t" style="right:188.5px;top:123.00px;font-size:6.6px;transform:scaleX(0.844);transform-origin:100% 7.29px;-webkit-text-stroke:0.08px #1c1c1c">30</div>
<div class="t" style="right:188.5px;top:105.00px;font-size:6.6px;transform:scaleX(0.844);transform-origin:100% 7.29px;-webkit-text-stroke:0.08px #1c1c1c">40</div>
<div class="t" style="right:188.5px;top:87.00px;font-size:6.6px;transform:scaleX(0.844);transform-origin:100% 7.29px;-webkit-text-stroke:0.08px #1c1c1c">50</div>
<div class="t" style="right:188.5px;top:69.00px;font-size:6.6px;transform:scaleX(0.844);transform-origin:100% 7.29px;-webkit-text-stroke:0.08px #1c1c1c">60</div>
<div class="a" style="left:410.2px;top:124.8px;width:0;height:0"><div class="t" style="left:-40px;top:-5px;width:80px;text-align:center;transform:rotate(-90deg) scaleX(0.86);font-size:7.6px;-webkit-text-stroke:0.05px #1c1c1c">Total Memory (MB)</div></div>
<div class="t" style="left:303.6px;width:300px;text-align:center;top:182.00px;font-size:6.6px;transform:scaleX(0.904);transform-origin:50% 7.29px;-webkit-text-stroke:0.08px #1c1c1c">20:25:30</div>
<div class="t" style="left:344.3px;width:300px;text-align:center;top:182.00px;font-size:6.6px;transform:scaleX(0.904);transform-origin:50% 7.29px;-webkit-text-stroke:0.08px #1c1c1c">20:26:00</div>
<div class="t" style="left:384.70000000000005px;width:300px;text-align:center;top:182.00px;font-size:6.6px;transform:scaleX(0.904);transform-origin:50% 7.29px;-webkit-text-stroke:0.08px #1c1c1c">20:26:30</div>
<div class="t" style="left:425.29999999999995px;width:300px;text-align:center;top:182.00px;font-size:6.6px;transform:scaleX(0.904);transform-origin:50% 7.29px;-webkit-text-stroke:0.08px #1c1c1c">20:27:00</div>
<div class="a" style="left:173px;top:215px;width:217px;height:93px;background:#fff;border:1px solid #b6b6b6"></div>
<div class="a" style="left:174px;top:216px;width:215px;height:12.5px;background:linear-gradient(#ffffff,#f3f3f3)"></div>
<div class="a" style="left:228.2px;top:228px;width:1px;height:79px;background:#efefef"></div>
<div class="a" style="left:228.2px;top:217px;width:1px;height:11px;background:#e6e6e6"></div>
<div class="a" style="left:288.3px;top:228px;width:1px;height:79px;background:#efefef"></div>
<div class="a" style="left:288.3px;top:217px;width:1px;height:11px;background:#e6e6e6"></div>
<div class="a" style="left:315.4px;top:228px;width:1px;height:79px;background:#efefef"></div>
<div class="a" style="left:315.4px;top:217px;width:1px;height:11px;background:#e6e6e6"></div>
<div class="a" style="left:342.4px;top:228px;width:1px;height:79px;background:#efefef"></div>
<div class="a" style="left:342.4px;top:217px;width:1px;height:11px;background:#e6e6e6"></div>
<div class="a" style="left:387.2px;top:228px;width:1px;height:79px;background:#efefef"></div>
<div class="a" style="left:387.2px;top:217px;width:1px;height:11px;background:#e6e6e6"></div>
<div class="a" style="left:174px;top:228.5px;width:215px;height:1px;background:#e4e4e4"></div>
<div class="t" style="left:177.4px;top:219.00px;font-size:7.8px;transform:scaleX(0.793);transform-origin:0 7.70px;">Peer Address</div>
<div class="t" style="right:327px;top:219.00px;font-size:7.8px;transform:scaleX(0.817);transform-origin:100% 7.70px;">Local Address</div>
<div class="t" style="left:292.2px;top:219.00px;font-size:7.8px;transform:scaleX(0.873);transform-origin:0 7.70px;">Mem...</div>
<div class="t" style="left:319.6px;top:219.00px;font-size:7.8px;transform:scaleX(0.817);transform-origin:0 7.70px;">Enqu...</div>
<div class="t" style="right:229.10000000000002px;top:219.00px;font-size:7.8px;transform:scaleX(0.833);transform-origin:100% 7.70px;">Dequeued</div>
<div class="a" style="left:174px;top:240.1px;width:215px;height:1px;background:#f0f0f0"></div>
<div class="a" style="left:174px;top:250.7px;width:215px;height:1px;background:#f0f0f0"></div>
<div class="a" style="left:174px;top:261.3px;width:215px;height:1px;background:#f0f0f0"></div>
<div class="a" style="left:174px;top:271.9px;width:215px;height:1px;background:#f0f0f0"></div>
<div class="a" style="left:174px;top:282.5px;width:215px;height:1px;background:#f0f0f0"></div>
<div class="a" style="left:174px;top:293.1px;width:215px;height:1px;background:#f0f0f0"></div>
<div class="a" style="left:174px;top:303.7px;width:215px;height:1px;background:#f0f0f0"></div>
<div class="t" style="left:177.2px;top:231.00px;font-size:7.8px;transform:scaleX(0.763);transform-origin:0 7.70px;">127.0.0.1:49504</div>
<div class="t" style="right:327px;top:231.00px;font-size:7.8px;transform:scaleX(0.780);transform-origin:100% 7.70px;">127.0.0.1:10000</div>
<div class="t" style="right:300.6px;top:231.00px;font-size:7.8px;transform:scaleX(0.783);transform-origin:100% 7.70px;">8192</div>
<div class="t" style="right:274px;top:231.00px;font-size:7.8px;transform:scaleX(0.783);transform-origin:100% 7.70px;">0</div>
<div class="t" style="right:229.8px;top:231.00px;font-size:7.8px;transform:scaleX(0.783);transform-origin:100% 7.70px;">19</div>
<div class="t" style="left:177.2px;top:241.00px;font-size:7.8px;transform:scaleX(0.763);transform-origin:0 7.70px;">127.0.0.1:49477</div>
<div class="t" style="right:327px;top:241.00px;font-size:7.8px;transform:scaleX(0.780);transform-origin:100% 7.70px;">127.0.0.1:10000</div>
<div class="t" style="right:300.6px;top:241.00px;font-size:7.8px;transform:scaleX(0.784);transform-origin:100% 7.70px;">16384</div>
<div class="t" style="right:274px;top:241.00px;font-size:7.8px;transform:scaleX(0.783);transform-origin:100% 7.70px;">0</div>
<div class="t" style="right:229.8px;top:241.00px;font-size:7.8px;transform:scaleX(0.784);transform-origin:100% 7.70px;">57730</div>
<div class="t" style="left:177.2px;top:252.00px;font-size:7.8px;transform:scaleX(0.763);transform-origin:0 7.70px;">127.0.0.1:49718</div>
<div class="t" style="right:327px;top:252.00px;font-size:7.8px;transform:scaleX(0.780);transform-origin:100% 7.70px;">127.0.0.1:10000</div>
<div class="t" style="right:300.6px;top:252.00px;font-size:7.8px;transform:scaleX(0.783);transform-origin:100% 7.70px;">0</div>
<div class="t" style="right:274px;top:252.00px;font-size:7.8px;transform:scaleX(0.783);transform-origin:100% 7.70px;">0</div>
<div class="t" style="right:229.8px;top:252.00px;font-size:7.8px;transform:scaleX(0.783);transform-origin:100% 7.70px;">0</div>
<div class="t" style="left:177.2px;top:263.00px;font-size:7.8px;transform:scaleX(0.763);transform-origin:0 7.70px;">127.0.0.1:49518</div>
<div class="t" style="right:327px;top:263.00px;font-size:7.8px;transform:scaleX(0.780);transform-origin:100% 7.70px;">127.0.0.1:10000</div>
<div class="t" style="right:300.6px;top:263.00px;font-size:7.8px;transform:scaleX(0.784);transform-origin:100% 7.70px;">16384</div>
<div class="t" style="right:274px;top:263.00px;font-size:7.8px;transform:scaleX(0.783);transform-origin:100% 7.70px;">0</div>
<div class="t" style="right:229.8px;top:263.00px;font-size:7.8px;transform:scaleX(0.784);transform-origin:100% 7.70px;">25391</div>
<div class="t" style="left:177.2px;top:273.00px;font-size:7.8px;transform:scaleX(0.763);transform-origin:0 7.70px;">127.0.0.1:49469</div>
<div class="t" style="right:327px;top:273.00px;font-size:7.8px;transform:scaleX(0.780);transform-origin:100% 7.70px;">127.0.0.1:10000</div>
<div class="t" style="right:300.6px;top:273.00px;font-size:7.8px;transform:scaleX(0.784);transform-origin:100% 7.70px;">864256</div>
<div class="t" style="right:274px;top:273.00px;font-size:7.8px;transform:scaleX(0.783);transform-origin:100% 7.70px;">0</div>
<div class="t" style="right:229.8px;top:273.00px;font-size:7.8px;transform:scaleX(0.784);transform-origin:100% 7.70px;">88857</div>
<div class="a" style="left:173px;top:311px;width:217px;height:83px;background:#fff;border:1px solid #b6b6b6"></div>
<div class="a" style="left:174px;top:312px;width:215px;height:12.3px;background:linear-gradient(#ffffff,#f3f3f3)"></div>
<div class="a" style="left:174px;top:324.3px;width:215px;height:1px;background:#e4e4e4"></div>
<div class="t" style="left:177.2px;top:315.00px;font-size:7.8px;transform:scaleX(0.805);transform-origin:0 7.70px;">Subscribed Streams</div>
<div class="a" style="left:174px;top:335.2px;width:215px;height:1px;background:#f0f0f0"></div>
<div class="a" style="left:174px;top:345.7px;width:215px;height:1px;background:#f0f0f0"></div>
<div class="a" style="left:174px;top:356.2px;width:215px;height:1px;background:#f0f0f0"></div>
<div class="a" style="left:174px;top:366.7px;width:215px;height:1px;background:#f0f0f0"></div>
<div class="a" style="left:174px;top:377.2px;width:215px;height:1px;background:#f0f0f0"></div>
<div class="t" style="left:177.2px;top:327.00px;font-size:7.8px;transform:scaleX(0.793);transform-origin:0 7.70px;">bba.BestAsks</div>
<div class="t" style="left:177.2px;top:337.00px;font-size:7.8px;transform:scaleX(0.801);transform-origin:0 7.70px;">bba.BestBids</div>
<div class="t" style="left:177.2px;top:348.00px;font-size:7.8px;transform:scaleX(0.831);transform-origin:0 7.70px;">system._internal_control</div>
<div class="a" style="left:174px;top:384px;width:215px;height:9px;background:#f0f0f0"></div>
<svg style="left:177px;top:386.5px" width="4" height="5" viewBox="0 0 4 5"><path d="M3 0.5L0.5 2.5 3 4.5z" fill="#404040"/></svg>
<svg style="left:383px;top:386.5px" width="4" height="5" viewBox="0 0 4 5"><path d="M0.5 0.5L3 2.5 0.5 4.5z" fill="#404040"/></svg>
<div class="a" style="left:184.3px;top:384.5px;width:155.3px;height:8px;border:1px solid #a4a4a4;border-radius:2px;background:linear-gradient(#f6f6f6,#dedede 50%,#d0d0d0)"></div>
<div class="a" style="left:259.95000000000005px;top:387px;width:5px;height:3px;background:repeating-linear-gradient(90deg,#808080 0 1px,transparent 1px 2px)"></div>
<div class="a" style="left:401px;top:215px;width:200px;height:179px;background:#fff"></div>
<div class="a" style="left:401px;top:215px;width:200px;height:12px;background:linear-gradient(#ffffff,#f3f3f3)"></div>
<div class="a" style="left:571px;top:227px;width:28px;height:157px;background:#f7f7f7"></div>
<div class="a" style="left:571px;top:215px;width:28px;height:12px;background:linear-gradient(#e6f3fb,#d2e8f7)"></div>
<div class="a" style="left:488.8px;top:227px;width:1px;height:157px;background:#f2f2f2"></div>
<div class="a" style="left:488.8px;top:217px;width:1px;height:10px;background:#e0e0e0"></div>
<div class="a" style="left:514.9px;top:227px;width:1px;height:157px;background:#f2f2f2"></div>
<div class="a" style="left:514.9px;top:217px;width:1px;height:10px;background:#e0e0e0"></div>
<div class="a" style="left:543.4px;top:227px;width:1px;height:157px;background:#f2f2f2"></div>
<div class="a" style="left:543.4px;top:217px;width:1px;height:10px;background:#e0e0e0"></div>
<div class="a" style="left:570.7px;top:227px;width:1px;height:157px;background:#f2f2f2"></div>
<div class="a" style="left:570.7px;top:217px;width:1px;height:10px;background:#e0e0e0"></div>
<div class="a" style="left:598.6px;top:227px;width:1px;height:157px;background:#f2f2f2"></div>
<div class="a" style="left:598.6px;top:217px;width:1px;height:10px;background:#e0e0e0"></div>
<div class="t" style="left:404px;top:218.00px;font-size:7.8px;transform:scaleX(0.841);transform-origin:0 7.70px;">Name</div>
<div class="t" style="right:99.10000000000002px;top:218.00px;font-size:7.8px;transform:scaleX(0.906);transform-origin:100% 7.70px;">In</div>
<div class="t" style="right:72px;top:218.00px;font-size:7.8px;transform:scaleX(0.875);transform-origin:100% 7.70px;">Out</div>
<div class="t" style="right:45px;top:218.00px;font-size:7.8px;transform:scaleX(0.811);transform-origin:100% 7.70px;">us/T</div>
<div class="t" style="left:583.3px;top:218.00px;font-size:7.8px;transform:scaleX(0.856);transform-origin:0 7.70px;">%...</div>
<svg style="left:583px;top:216px" width="4" height="2" viewBox="0 0 4 2"><path d="M0 0h4L2 2z" fill="#3a7fc0"/></svg>
<div class="t" style="left:404px;top:230.00px;font-size:7.8px;transform:scaleX(0.793);transform-origin:0 7.70px;">bba.Update_Bids_and_Asks</div>
<div class="t" style="right:99.39999999999998px;top:230.00px;font-size:7.8px;transform:scaleX(0.783);transform-origin:100% 7.70px;">1000</div>
<div class="t" style="right:73.20000000000005px;top:230.00px;font-size:7.8px;transform:scaleX(0.783);transform-origin:100% 7.70px;">1000</div>
<div class="t" style="right:45.299999999999955px;top:230.00px;font-size:7.8px;transform:scaleX(0.802);transform-origin:100% 7.70px;">0.0</div>
<div class="t" style="right:17.700000000000045px;top:230.00px;font-size:7.8px;transform:scaleX(0.790);transform-origin:100% 7.70px;">0.00</div>
<div class="t" style="left:404px;top:240.00px;font-size:7.8px;transform:scaleX(0.802);transform-origin:0 7.70px;">bba.IsNewBestAsk.IsNewB...</div>
<div class="t" style="right:99.39999999999998px;top:240.00px;font-size:7.8px;transform:scaleX(0.783);transform-origin:100% 7.70px;">1000</div>
<div class="t" style="right:73.20000000000005px;top:240.00px;font-size:7.8px;transform:scaleX(0.784);transform-origin:100% 7.70px;">187</div>
<div class="t" style="right:45.299999999999955px;top:240.00px;font-size:7.8px;transform:scaleX(0.802);transform-origin:100% 7.70px;">0.0</div>
<div class="t" style="right:17.700000000000045px;top:240.00px;font-size:7.8px;transform:scaleX(0.790);transform-origin:100% 7.70px;">0.00</div>
<div class="t" style="left:404px;top:251.00px;font-size:7.8px;transform:scaleX(0.816);transform-origin:0 7.70px;">bba.IsNewBestBid.IsNewB...</div>
<div class="t" style="right:99.39999999999998px;top:251.00px;font-size:7.8px;transform:scaleX(0.783);transform-origin:100% 7.70px;">1000</div>
<div class="t" style="right:73.20000000000005px;top:251.00px;font-size:7.8px;transform:scaleX(0.784);transform-origin:100% 7.70px;">130</div>
<div class="t" style="right:45.299999999999955px;top:251.00px;font-size:7.8px;transform:scaleX(0.802);transform-origin:100% 7.70px;">0.0</div>
<div class="t" style="right:17.700000000000045px;top:251.00px;font-size:7.8px;transform:scaleX(0.790);transform-origin:100% 7.70px;">0.00</div>
<div class="t" style="left:404px;top:261.00px;font-size:7.8px;transform:scaleX(0.808);transform-origin:0 7.70px;">bba.PreserveAskInfo</div>
<div class="t" style="right:99.39999999999998px;top:261.00px;font-size:7.8px;transform:scaleX(0.784);transform-origin:100% 7.70px;">187</div>
<div class="t" style="right:73.20000000000005px;top:261.00px;font-size:7.8px;transform:scaleX(0.784);transform-origin:100% 7.70px;">187</div>
<div class="t" style="right:45.299999999999955px;top:261.00px;font-size:7.8px;transform:scaleX(0.802);transform-origin:100% 7.70px;">0.0</div>
<div class="t" style="right:17.700000000000045px;top:261.00px;font-size:7.8px;transform:scaleX(0.790);transform-origin:100% 7.70px;">0.00</div>
<div class="t" style="left:404px;top:272.00px;font-size:7.8px;transform:scaleX(0.810);transform-origin:0 7.70px;">bba.PreserveBidInfo</div>
<div class="t" style="right:99.39999999999998px;top:272.00px;font-size:7.8px;transform:scaleX(0.784);transform-origin:100% 7.70px;">130</div>
<div class="t" style="right:73.20000000000005px;top:272.00px;font-size:7.8px;transform:scaleX(0.784);transform-origin:100% 7.70px;">130</div>
<div class="t" style="right:45.299999999999955px;top:272.00px;font-size:7.8px;transform:scaleX(0.802);transform-origin:100% 7.70px;">0.0</div>
<div class="t" style="right:17.700000000000045px;top:272.00px;font-size:7.8px;transform:scaleX(0.790);transform-origin:100% 7.70px;">0.00</div>
<div class="t" style="left:404px;top:282.00px;font-size:7.8px;transform:scaleX(0.825);transform-origin:0 7.70px;">sideplay.Map1</div>
<div class="t" style="right:99.39999999999998px;top:282.00px;font-size:7.8px;transform:scaleX(0.784);transform-origin:100% 7.70px;">130</div>
<div class="t" style="right:73.20000000000005px;top:282.00px;font-size:7.8px;transform:scaleX(0.784);transform-origin:100% 7.70px;">130</div>
<div class="t" style="right:45.299999999999955px;top:282.00px;font-size:7.8px;transform:scaleX(0.802);transform-origin:100% 7.70px;">0.0</div>
<div class="t" style="right:17.700000000000045px;top:282.00px;font-size:7.8px;transform:scaleX(0.790);transform-origin:100% 7.70px;">0.00</div>
<div class="a" style="left:400px;top:385px;width:201px;height:9px;background:#f0f0f0"></div>
<svg style="left:403px;top:387.5px" width="4" height="5" viewBox="0 0 4 5"><path d="M3 0.5L0.5 2.5 3 4.5z" fill="#404040"/></svg>
<svg style="left:595px;top:387.5px" width="4" height="5" viewBox="0 0 4 5"><path d="M0.5 0.5L3 2.5 0.5 4.5z" fill="#404040"/></svg>
<div class="a" style="left:410px;top:385.5px;width:153.79999999999995px;height:8px;border:1px solid #a4a4a4;border-radius:2px;background:linear-gradient(#f6f6f6,#dedede 50%,#d0d0d0)"></div>
<div class="a" style="left:484.9px;top:388px;width:5px;height:3px;background:repeating-linear-gradient(90deg,#808080 0 1px,transparent 1px 2px)"></div>
</body></html>
